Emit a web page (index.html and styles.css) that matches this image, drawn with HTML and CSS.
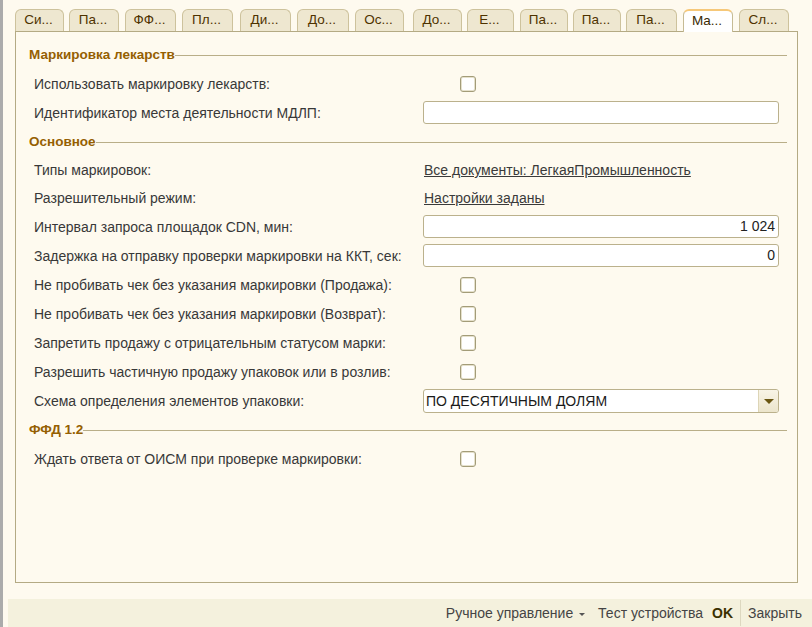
FILE: index.html
```html
<!DOCTYPE html>
<html lang="ru">
<head>
<meta charset="utf-8">
<title>Маркировка</title>
<link rel="stylesheet" href="styles.css">
</head>
<body>
<div class="window">
  <div class="strip"></div>
  <div class="main">
    <div class="tabs">
      <div class="tab">Си...</div>
      <div class="tab">Па...</div>
      <div class="tab">ФФ...</div>
      <div class="tab">Пл...</div>
      <div class="tab">Ди...</div>
      <div class="tab">До...</div>
      <div class="tab">Ос...</div>
      <div class="tab">До...</div>
      <div class="tab">Е...</div>
      <div class="tab">Па...</div>
      <div class="tab">Па...</div>
      <div class="tab">Па...</div>
      <div class="tab active">Ма...</div>
      <div class="tab">Сл...</div>
    </div>
    <div class="panel">
      <div class="group-title"><span>Маркировка лекарств</span><i class="rule"></i></div>
      <div class="row"><span class="label">Использовать маркировку лекарств:</span><span class="control"><span class="check"></span></span></div>
      <div class="row"><span class="label">Идентификатор места деятельности МДЛП:</span><span class="control"><span class="input"></span></span></div>

      <div class="group-title"><span>Основное</span><i class="rule"></i></div>
      <div class="row short"><span class="label">Типы маркировок:</span><span class="control"><a class="link" href="#">Все документы: ЛегкаяПромышленность</a></span></div>
      <div class="row short"><span class="label">Разрешительный режим:</span><span class="control"><a class="link" href="#">Настройки заданы</a></span></div>
      <div class="row"><span class="label">Интервал запроса площадок CDN, мин:</span><span class="control"><span class="input num">1 024</span></span></div>
      <div class="row"><span class="label">Задержка на отправку проверки маркировки на ККТ, сек:</span><span class="control"><span class="input num">0</span></span></div>
      <div class="row"><span class="label">Не пробивать чек без указания маркировки (Продажа):</span><span class="control"><span class="check"></span></span></div>
      <div class="row"><span class="label">Не пробивать чек без указания маркировки (Возврат):</span><span class="control"><span class="check"></span></span></div>
      <div class="row"><span class="label">Запретить продажу с отрицательным статусом марки:</span><span class="control"><span class="check"></span></span></div>
      <div class="row"><span class="label">Разрешить частичную продажу упаковок или в розлив:</span><span class="control"><span class="check"></span></span></div>
      <div class="row"><span class="label">Схема определения элементов упаковки:</span><span class="control"><span class="input select"><span class="select-text">ПО ДЕСЯТИЧНЫМ ДОЛЯМ</span><span class="select-btn"><i class="arrow"></i></span></span></span></div>

      <div class="group-title"><span>ФФД 1.2</span><i class="rule"></i></div>
      <div class="row"><span class="label">Ждать ответа от ОИСМ при проверке маркировки:</span><span class="control"><span class="check"></span></span></div>
    </div>
    <div class="bottombar">
      <span class="cmd">Ручное управление <i class="caret"></i></span>
      <span class="cmd">Тест устройства</span>
      <span class="cmd ok">OK</span>
      <span class="sep"></span>
      <span class="cmd">Закрыть</span>
    </div>
  </div>
</div>
</body>
</html>
```

FILE: styles.css
```css
html, body {
  margin: 0;
  padding: 0;
  height: 100%;
}
body {
  background: #fefaef;
  font-family: "Liberation Sans", Arial, sans-serif;
  font-size: 14px;
  color: #383838;
  overflow: hidden;
}
.window {
  display: flex;
  height: 627px;
}
.strip {
  width: 3px;
  background: #ababab;
  flex: none;
}
.main {
  flex: 1;
  display: flex;
  flex-direction: column;
}
.tabs {
  display: flex;
  margin-top: 9px;
  padding-left: 12px;
  height: 22px;
  position: relative;
  z-index: 1;
}
.tab {
  box-sizing: border-box;
  height: 22px;
  background: #eee7d0;
  border: 1px solid #cdc29c;
  border-bottom: none;
  border-radius: 6px 6px 0 0;
  color: #4e3300;
  font-size: 13.5px;
  line-height: 20px;
  text-align: center;
  padding-right: 2px;
  flex: none;
}
.tab:nth-child(1) { width: 49px; margin-right: 5px; }
.tab:nth-child(2) { width: 50px; margin-right: 6px; }
.tab:nth-child(3) { width: 51px; margin-right: 6px; }
.tab:nth-child(4) { width: 51px; margin-right: 7px; }
.tab:nth-child(5) { width: 51px; margin-right: 6px; }
.tab:nth-child(6) { width: 52px; margin-right: 6px; }
.tab:nth-child(7) { width: 49px; margin-right: 9px; }
.tab:nth-child(8) { width: 49px; margin-right: 5px; }
.tab:nth-child(9) { width: 47px; margin-right: 6px; }
.tab:nth-child(10) { width: 48px; margin-right: 5px; }
.tab:nth-child(11) { width: 48px; margin-right: 5px; }
.tab:nth-child(12) { width: 51px; margin-right: 6px; }
.tab:nth-child(13) { width: 50px; margin-right: 6px; }
.tab:nth-child(14) { width: 50px; }
.tab.active {
  background: #ffffff;
  border-color: #c6bb94;
  border-top: 2px solid #f6c879;
  height: 23px;
  line-height: 20px;
  color: #3a2a00;
}
.panel {
  box-sizing: border-box;
  margin-left: 12px;
  width: 783px;
  height: 552px;
  border: 1px solid #b4aa84;
  background: #fefaef;
  padding: 8px 17px 0 13px;
  flex: none;
}
.group-title {
  display: flex;
  align-items: center;
  height: 29px;
  color: #955f02;
  font-weight: bold;
  font-size: 13.5px;
  margin-right: -7px;
}
.group-title .rule {
  flex: 1;
  height: 1px;
  background: #b9ae88;
  margin-top: 1px;
}
.row {
  display: flex;
  align-items: center;
  height: 29px;
}
.row.short {
  height: 28px;
}
.label {
  width: 389px;
  padding-left: 5px;
  flex: none;
  white-space: nowrap;
}
.control {
  flex: 1;
  display: flex;
  align-items: center;
}
.check {
  box-sizing: border-box;
  width: 16px;
  height: 16px;
  margin-left: 37px;
  border: 1px solid #a39c78;
  border-radius: 3px;
  background: #ffffff;
  box-shadow: inset 0 0 0 1px #e6e1cc;
}
.input {
  box-sizing: border-box;
  width: 356px;
  height: 23px;
  border: 1px solid #bbb18c;
  border-radius: 3px;
  background: #ffffff;
  color: #222;
  line-height: 21px;
  padding: 0 3px;
}
.input.num {
  text-align: right;
}
.link {
  color: #3a3a3a;
  text-decoration: underline;
  margin-left: 1px;
}
.select {
  display: flex;
  padding: 0;
  height: 24px;
  overflow: hidden;
}
.select-text {
  flex: 1;
  padding-left: 2px;
  line-height: 22px;
  color: #1a1a1a;
}
.select-btn {
  width: 19px;
  background: linear-gradient(#f8f4e6, #ece5cc);
  border-left: 1px solid #ddd5b6;
  display: flex;
  align-items: center;
  justify-content: center;
}
.arrow {
  width: 0;
  height: 0;
  border-left: 5px solid transparent;
  border-right: 5px solid transparent;
  border-top: 5px solid #6a5612;
  margin-top: 1px;
}
.bottombar {
  margin-top: 16px;
  margin-left: 5px;
  height: 28px;
  background: #f4f1dd;
  display: flex;
  align-items: center;
  justify-content: flex-end;
  padding-right: 10px;
  font-size: 14px;
  color: #444;
}
.cmd {
  margin-left: 9px;
  white-space: nowrap;
}
.cmd:first-child {
  margin-right: 2px;
}
.cmd.ok {
  font-weight: bold;
  color: #3b3000;
}
.caret {
  display: inline-block;
  width: 0;
  height: 0;
  border-left: 3px solid transparent;
  border-right: 3px solid transparent;
  border-top: 3px solid #555;
  vertical-align: middle;
  margin-left: 2px;
  margin-right: 2px;
}
.sep {
  width: 1px;
  height: 26px;
  background: #ddd8c0;
  margin-left: 7px;
  margin-right: -2px;
}
```
